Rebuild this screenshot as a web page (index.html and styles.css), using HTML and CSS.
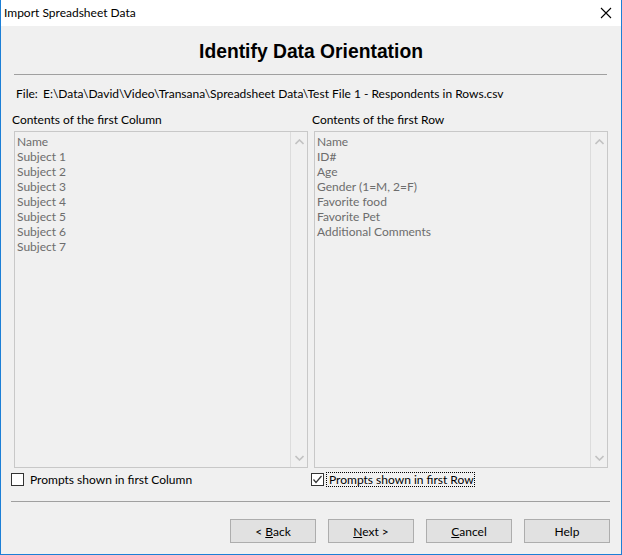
FILE: index.html
```html
<!DOCTYPE html>
<html>
<head>
<meta charset="utf-8">
<link rel="stylesheet" href="styles.css">
</head>
<body>
<div class="window">
  <div class="titlebar">
    <span class="title-text">Import Spreadsheet Data</span>
    <svg class="close" width="12" height="12" viewBox="0 0 12 12"><path d="M1 1 L11 11 M11 1 L1 11" stroke="#000" stroke-width="1.1" fill="none"/></svg>
  </div>
  <div class="content">
    <h1 class="heading">Identify Data Orientation</h1>
    <div class="rule top-rule"></div>
    <div class="file-line"><span class="file-label">File:</span><span>E:\Data\David\Video\Transana\Spreadsheet Data\Test File 1 - Respondents in Rows.csv</span></div>
    <div class="columns">
      <div class="col">
        <div class="col-label">Contents of the first Column</div>
        <div class="listbox">
          <div class="items">
            <div>Name</div>
            <div>Subject 1</div>
            <div>Subject 2</div>
            <div>Subject 3</div>
            <div>Subject 4</div>
            <div>Subject 5</div>
            <div>Subject 6</div>
            <div>Subject 7</div>
          </div>
          <div class="scrollbar">
            <svg class="chev" width="9" height="6" viewBox="0 0 9 6"><path d="M0.5 5 L4.5 1 L8.5 5" stroke="#c2c2c2" stroke-width="1.6" fill="none"/></svg>
            <svg class="chev" width="9" height="6" viewBox="0 0 9 6"><path d="M0.5 1 L4.5 5 L8.5 1" stroke="#c2c2c2" stroke-width="1.6" fill="none"/></svg>
          </div>
        </div>
        <div class="check-row">
          <span class="checkbox"></span>
          <span class="check-label">Prompts shown in first Column</span>
        </div>
      </div>
      <div class="col">
        <div class="col-label">Contents of the first Row</div>
        <div class="listbox">
          <div class="items">
            <div>Name</div>
            <div>ID#</div>
            <div>Age</div>
            <div>Gender (1=M, 2=F)</div>
            <div>Favorite food</div>
            <div>Favorite Pet</div>
            <div>Additional Comments</div>
          </div>
          <div class="scrollbar">
            <svg class="chev" width="9" height="6" viewBox="0 0 9 6"><path d="M0.5 5 L4.5 1 L8.5 5" stroke="#c2c2c2" stroke-width="1.6" fill="none"/></svg>
            <svg class="chev" width="9" height="6" viewBox="0 0 9 6"><path d="M0.5 1 L4.5 5 L8.5 1" stroke="#c2c2c2" stroke-width="1.6" fill="none"/></svg>
          </div>
        </div>
        <div class="check-row">
          <span class="checkbox checked"><svg width="11" height="11" viewBox="0 0 11 11"><path d="M1.5 5.5 L4 8.5 L9.5 2" stroke="#333" stroke-width="1.2" fill="none"/></svg></span>
          <span class="check-label focused">Prompts shown in first Row</span>
        </div>
      </div>
    </div>
    <div class="rule bottom-rule"></div>
    <div class="buttons">
      <button class="btn">&lt; <u>B</u>ack</button>
      <button class="btn"><u>N</u>ext &gt;</button>
      <button class="btn"><u>C</u>ancel</button>
      <button class="btn">Help</button>
    </div>
  </div>
</div>
</body>
</html>
```

FILE: styles.css
```css
html, body {
  margin: 0;
  padding: 0;
}
body {
  font-family: Lato, "Noto Sans", sans-serif;
  font-size: 12px;
  line-height: 15px;
  color: #000;
}
.window {
  box-sizing: border-box;
  width: 622px;
  height: 555px;
  border: 1px solid #1c7fd6;
  border-top: 0;
  display: flex;
  flex-direction: column;
  background: #f0f0f0;
}
.titlebar {
  height: 26px;
  background: #fff;
  display: flex;
  align-items: center;
  justify-content: space-between;
  padding: 0 9px 0 3px;
  flex: none;
}
.title-text {
  margin-top: -1px;
}
.close {
  display: block;
}
.content {
  flex: 1;
  display: flex;
  flex-direction: column;
}
.heading {
  margin: 13px 0 0;
  font-family: "Liberation Sans", Arial, sans-serif;
  font-size: 19.3px;
  line-height: 25px;
  font-weight: bold;
  text-align: center;
}
.rule {
  height: 1px;
  background: #a0a0a0;
}
.top-rule {
  margin: 10px 14px 0 13px;
}
.file-line {
  margin: 11px 0 0 15px;
  display: flex;
}
.file-label {
  width: 27px;
}
.columns {
  margin: 11px 0 0 10px;
  display: grid;
  grid-template-columns: 300px 300px;
}
.col {
  display: flex;
  flex-direction: column;
}
.col-label {
  margin-left: 1px;
}
.listbox {
  margin: 4px 0 0 3px;
  width: 294px;
  height: 337px;
  box-sizing: border-box;
  border: 1px solid #c8c8c8;
  display: flex;
}
.items {
  flex: 1;
  padding: 2px 0 0 2px;
  color: #6d6d6d;
}
.scrollbar {
  width: 16px;
  border-left: 1px solid #dcdcdc;
  display: flex;
  flex-direction: column;
  justify-content: space-between;
  align-items: center;
  padding: 7px 0 6px;
}
.chev {
  display: block;
}
.check-row {
  margin-top: 4px;
  display: flex;
  align-items: center;
  height: 15px;
}
.checkbox {
  box-sizing: border-box;
  width: 13px;
  height: 13px;
  border: 1px solid #333;
  background: #fff;
  display: flex;
  align-items: center;
  justify-content: center;
}
.check-label {
  margin-left: 6px;
}
.check-label.focused {
  margin-left: 2px;
  padding: 0 1px 0 3px;
  outline: 1px dotted #000;
  outline-offset: -1px;
}
.bottom-rule {
  margin: 14px 11px 0 10px;
}
.buttons {
  margin: 17px 11px 0 0;
  display: flex;
  justify-content: flex-end;
  gap: 12px;
}
.btn {
  box-sizing: border-box;
  width: 86px;
  height: 24px;
  background: #e1e1e1;
  border: 1px solid #adadad;
  font-family: inherit;
  font-size: 12px;
  color: #000;
  padding: 0;
}
```
